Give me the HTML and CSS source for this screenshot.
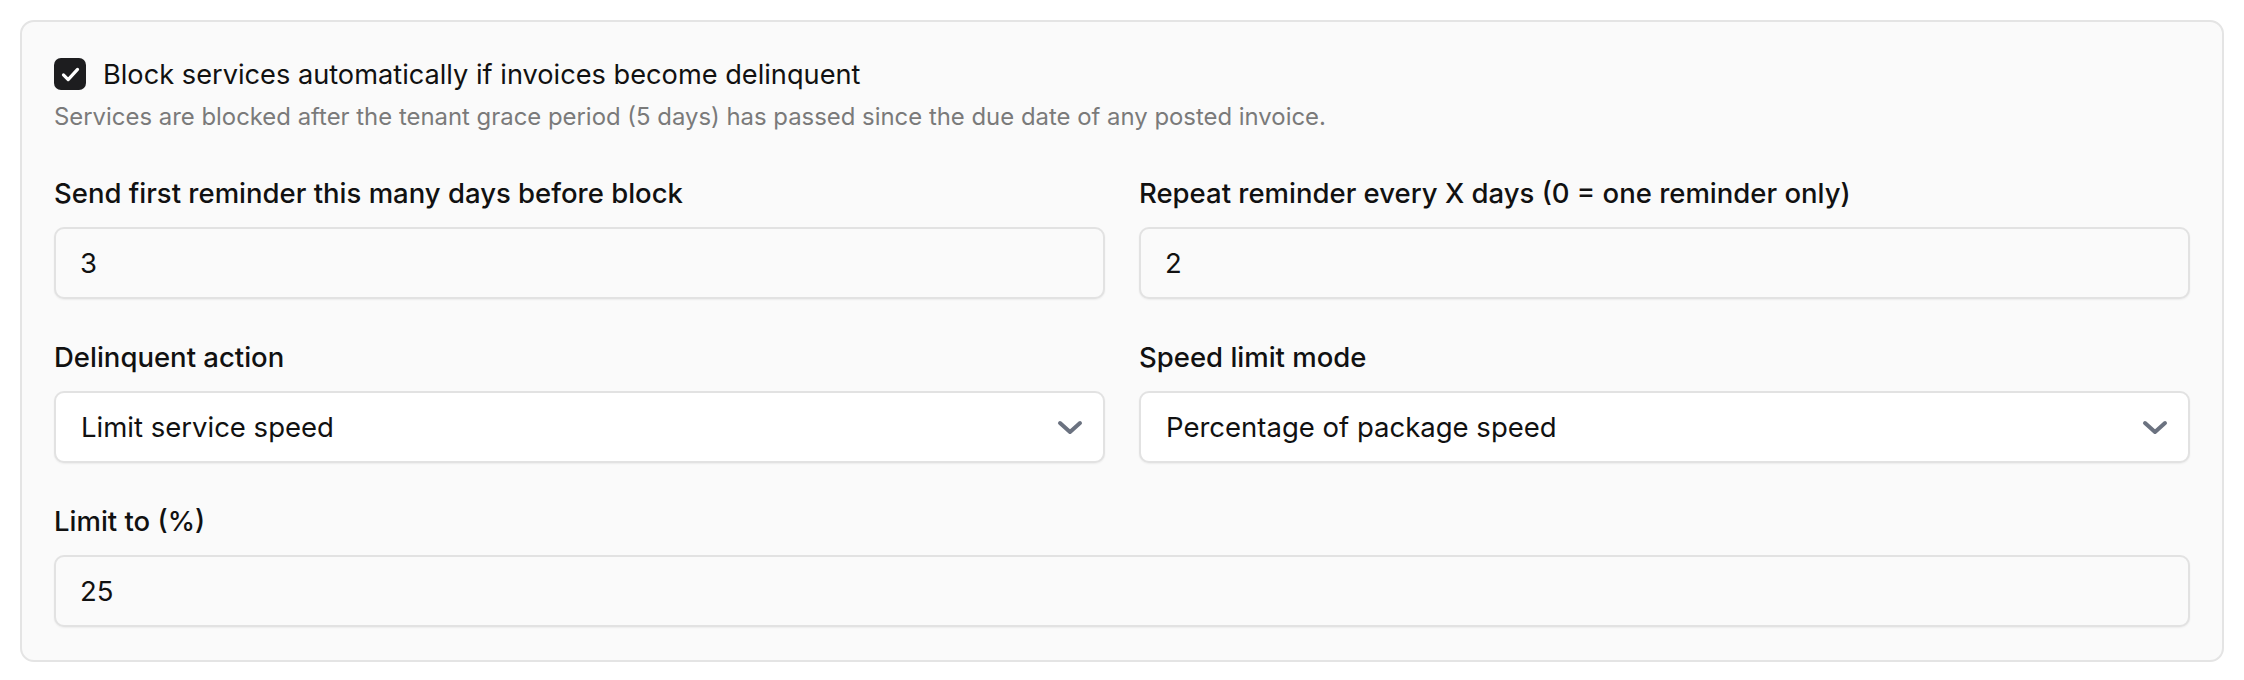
FILE: index.html
```html
<!DOCTYPE html>
<html lang="en">
<head>
    <meta charset="UTF-8">
    <meta name="viewport" content="width=device-width, initial-scale=1.0">
    <title>Delinquency Settings</title>
    <link rel="stylesheet" href="styles.css">
</head>
<body>
    <div class="settings-card">
        <label class="check-row">
            <span class="check-box">
                <svg viewBox="0 0 20 16" width="19" height="15"><path d="M2.5 8.5l5 5L17.5 2.5" fill="none" stroke="#fff" stroke-width="3.4" stroke-linecap="round" stroke-linejoin="round"/></svg>
            </span>
            <span class="check-label">Block services automatically if invoices become delinquent</span>
        </label>
        <p class="help-text">Services are blocked after the tenant grace period (5 days) has passed since the due date of any posted invoice.</p>

        <div class="field-grid">
            <div class="field">
                <div class="field-label">Send first reminder this many days before block</div>
                <div class="text-input">3</div>
            </div>
            <div class="field">
                <div class="field-label">Repeat reminder every X days (0 = one reminder only)</div>
                <div class="text-input">2</div>
            </div>
            <div class="field">
                <div class="field-label">Delinquent action</div>
                <div class="select-input">
                    <span>Limit service speed</span>
                    <svg class="chevron" viewBox="0 0 28 17" width="28" height="17"><path d="M4 4l10 9 10-9" fill="none" stroke="#6b7280" stroke-width="4" stroke-linecap="round" stroke-linejoin="round"/></svg>
                </div>
            </div>
            <div class="field">
                <div class="field-label">Speed limit mode</div>
                <div class="select-input">
                    <span>Percentage of package speed</span>
                    <svg class="chevron" viewBox="0 0 28 17" width="28" height="17"><path d="M4 4l10 9 10-9" fill="none" stroke="#6b7280" stroke-width="4" stroke-linecap="round" stroke-linejoin="round"/></svg>
                </div>
            </div>
            <div class="field full">
                <div class="field-label">Limit to (%)</div>
                <div class="text-input">25</div>
            </div>
        </div>
    </div>
</body>
</html>
```

FILE: styles.css
```css
body {
    font-family: Inter, "Noto Sans", sans-serif;
    margin: 0;
    padding: 20px;
    background-color: #ffffff;
    color: #111111;
}
.settings-card {
    background-color: #fafafa;
    border: 2px solid #e4e4e4;
    border-radius: 14px;
    padding: 32px 32px 33px;
}
.check-row {
    display: flex;
    align-items: center;
    gap: 17px;
    height: 40px;
}
.check-box {
    width: 32px;
    height: 32px;
    border-radius: 7px;
    background-color: #1d1d1f;
    display: flex;
    align-items: center;
    justify-content: center;
}
.check-label {
    font-size: 27.2px;
    color: #111111;
}
.help-text {
    margin: 6px 0 0;
    font-size: 23.9px;
    line-height: 34px;
    color: #7a7a7a;
}
.field-grid {
    display: grid;
    grid-template-columns: 1fr 1fr;
    column-gap: 34px;
    row-gap: 38px;
    margin-top: 39px;
}
.field.full {
    grid-column: 1 / -1;
}
.field-label {
    font-size: 27.5px;
    font-weight: 500;
    line-height: 40px;
    margin-bottom: 14px;
}
.text-input,
.select-input {
    box-sizing: border-box;
    height: 72px;
    border: 2px solid #e2e2e2;
    border-radius: 10px;
    padding: 0 24px;
    font-size: 27.5px;
    display: flex;
    align-items: center;
    background-color: #fafafa;
    box-shadow: 0 1px 2px rgba(0, 0, 0, 0.06);
}
.select-input {
    background-color: #ffffff;
    justify-content: space-between;
    padding-left: 25px;
    padding-right: 19px;
}
```
